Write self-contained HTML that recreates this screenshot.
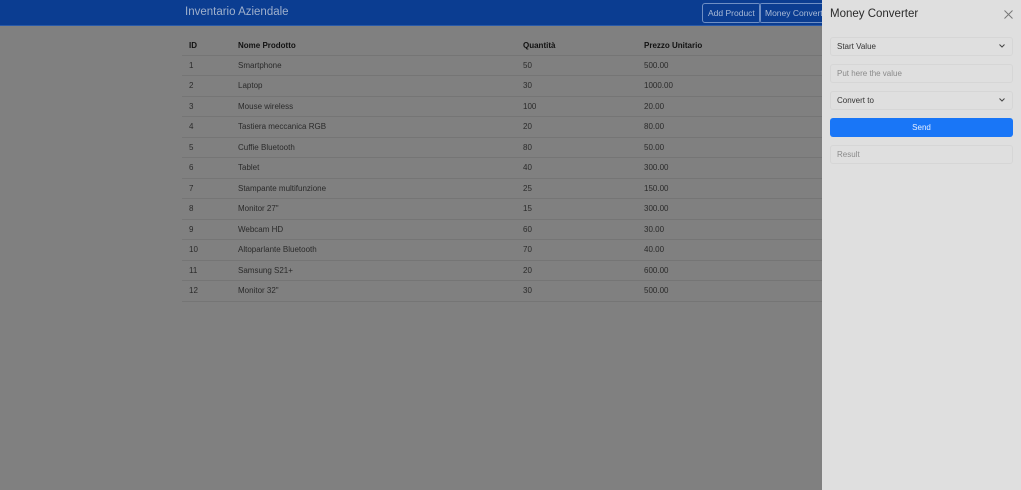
<!DOCTYPE html>
<html><head><meta charset="utf-8"><style>
*{box-sizing:border-box;margin:0;padding:0}
body{width:1021px;height:490px;overflow:hidden;background:#808080;font-family:"Liberation Sans",sans-serif;font-size:8px;color:#1a1a1a;position:relative}
.nav{position:absolute;left:0;top:0;width:1021px;height:26px;background:#0b3d91;border-bottom:1px solid #2a5aa8}
.brand{position:absolute;left:185px;top:6px;font-size:11.5px;color:#9fb0cc}
.btn{position:absolute;top:3px;height:20px;border:1px solid #6f8fc4;border-radius:3px;color:#a9bad6;font-size:8.5px;line-height:18px;padding:0 5px;white-space:nowrap}
table{position:absolute;left:182px;top:36px;width:660px;border-collapse:collapse}
td,th{height:20.5px;text-align:left;padding-left:7px;border-bottom:1px solid #757575;font-size:8px;color:#2a2a2a}
th{font-weight:bold;color:#111;height:19px}
.oc{position:absolute;left:822px;top:0;width:199px;height:490px;background:#dfdfdf}
.oc h5{position:absolute;left:8px;top:8px;font-size:11.5px;font-weight:normal;color:#2a2a2a}
.x{position:absolute;right:8px;top:10px}
.f{position:absolute;left:8px;width:183px;height:19px;border:1px solid #d6d6d6;border-radius:3px;background:#dfdfdf;font-size:8px;line-height:17px;padding-left:6px;color:#333}
.ph{color:#8a8a8a}
.chev{position:absolute;right:7px;top:6px}
.send{position:absolute;left:8px;top:118px;width:183px;height:19px;background:#1976f7;border-radius:3px;color:#e8f0ff;font-size:8px;text-align:center;line-height:19px}
</style></head><body>
<div class="nav"><div class="brand">Inventario Aziendale</div>
<div class="btn" style="left:702px">Add Product</div>
<div class="btn" style="left:759px;width:80px;overflow:hidden">Money Converter</div></div>
<table>
<tr><th style="width:49px">ID</th><th style="width:285px">Nome Prodotto</th><th style="width:121px">Quantità</th><th>Prezzo Unitario</th></tr>
<tr><td>1</td><td>Smartphone</td><td>50</td><td>500.00</td></tr>
<tr><td>2</td><td>Laptop</td><td>30</td><td>1000.00</td></tr>
<tr><td>3</td><td>Mouse wireless</td><td>100</td><td>20.00</td></tr>
<tr><td>4</td><td>Tastiera meccanica RGB</td><td>20</td><td>80.00</td></tr>
<tr><td>5</td><td>Cuffie Bluetooth</td><td>80</td><td>50.00</td></tr>
<tr><td>6</td><td>Tablet</td><td>40</td><td>300.00</td></tr>
<tr><td>7</td><td>Stampante multifunzione</td><td>25</td><td>150.00</td></tr>
<tr><td>8</td><td>Monitor 27"</td><td>15</td><td>300.00</td></tr>
<tr><td>9</td><td>Webcam HD</td><td>60</td><td>30.00</td></tr>
<tr><td>10</td><td>Altoparlante Bluetooth</td><td>70</td><td>40.00</td></tr>
<tr><td>11</td><td>Samsung S21+</td><td>20</td><td>600.00</td></tr>
<tr><td>12</td><td>Monitor 32"</td><td>30</td><td>500.00</td></tr>
</table>
<div class="oc"><h5>Money Converter</h5>
<svg class="x" width="9" height="9" viewBox="0 0 9 9"><path d="M0.5 0.5L8.5 8.5M8.5 0.5L0.5 8.5" stroke="#777" stroke-width="1"/></svg>
<div class="f" style="top:37px">Start Value<svg class="chev" width="6" height="4" viewBox="0 0 6 4"><path d="M0.5 0.5L3 3L5.5 0.5" stroke="#444" fill="none" stroke-width="1"/></svg></div>
<div class="f ph" style="top:64px">Put here the value</div>
<div class="f" style="top:91px">Convert to<svg class="chev" width="6" height="4" viewBox="0 0 6 4"><path d="M0.5 0.5L3 3L5.5 0.5" stroke="#444" fill="none" stroke-width="1"/></svg></div>
<div class="send">Send</div>
<div class="f ph" style="top:145px">Result</div>
</div>
</body></html>
